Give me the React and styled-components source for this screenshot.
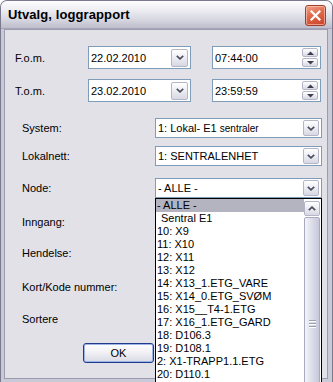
import React from "react";
import styled, { createGlobalStyle } from "styled-components";

const Global = createGlobalStyle`
  html, body { margin: 0; padding: 0; background: #ffffff; overflow: hidden; }
  body { font-family: "Liberation Sans", Arial, sans-serif; font-size: 11px; color: #000; }
  * { box-sizing: border-box; }
`;

const Window = styled.div`
  width: 333px;
  height: 382px;
  display: flex;
  flex-direction: column;
  background: #c4c5d4;
  border: 1px solid #7a7a8e;
  border-bottom: none;
  border-radius: 7px 7px 0 0;
  overflow: hidden;
`;

const TitleBar = styled.div`
  height: 28px;
  flex: none;
  display: flex;
  align-items: center;
  justify-content: space-between;
  padding: 0 6px 0 7px;
  background: linear-gradient(180deg, #fdfdfe 0%, #ececf2 35%, #d6d6e0 70%, #bdbdcc 100%);
  border-bottom: 1px solid #a5a5b8;
`;

const Title = styled.span`
  font-family: "Liberation Sans", Arial, sans-serif;
  font-weight: bold;
  font-size: 13px;
  color: #000;
  letter-spacing: 0.1px;
`;

const CloseBtn = styled.div`
  width: 21px;
  height: 21px;
  margin-top: 2px;
  border-radius: 3px;
  border: 1px solid #a33c28;
  background: linear-gradient(160deg, #f0a58d 0%, #e06848 45%, #c9432a 100%);
  display: flex;
  align-items: center;
  justify-content: center;
  box-shadow: inset 0 0 0 1px rgba(255, 210, 195, 0.6);
`;

const Frame = styled.div`
  flex: 1;
  display: flex;
  padding: 0 4px 3px 3px;
  background: #c9cad8;
`;

const Panel = styled.div`
  flex: 1;
  background: #e2e1e8;
  border: 1px solid #9c9cb0;
  padding: 16px 0 0 10px;
  display: flex;
  flex-direction: column;
`;

const Row = styled.div`
  display: flex;
  align-items: center;
  height: ${(p) => p.$h || 20}px;
  margin-top: ${(p) => p.$mt || 0}px;
  padding-left: ${(p) => p.$indent || 0}px;
`;

const Label = styled.div`
  width: ${(p) => p.$w}px;
  flex: none;
  white-space: nowrap;
`;

const Field = styled.div`
  position: relative;
  width: ${(p) => p.$w}px;
  height: ${(p) => p.$h || 20}px;
  margin-left: ${(p) => p.$ml || 0}px;
  flex: none;
  background: #fff;
  border: 1px solid #7f9db9;
  display: flex;
  align-items: center;
  padding: 0 2px 0 2px;
`;

const FieldText = styled.div`
  flex: 1;
  white-space: nowrap;
  overflow: hidden;
`;

const Small = styled.span`
  font-size: 10px;
`;

const DropBtn = styled.div`
  width: ${(p) => p.$w || 17}px;
  height: ${(p) => p.$h || 16}px;
  flex: none;
  border: 1px solid #b4b6c8;
  border-radius: 2px;
  background: linear-gradient(180deg, #ffffff 0%, #eeeef4 45%, #d7d8e2 100%);
  display: flex;
  align-items: center;
  justify-content: center;
`;

const Spin = styled.div`
  width: 16px;
  height: 19px;
  flex: none;
  display: flex;
  flex-direction: column;
  gap: 1px;
`;

const SpinBtn = styled.div`
  flex: 1;
  border: 1px solid #b4b6c8;
  border-radius: 2px;
  background: linear-gradient(180deg, #ffffff 0%, #ececf3 50%, #d7d8e2 100%);
  display: flex;
  align-items: center;
  justify-content: center;
`;

const List = styled.div`
  position: absolute;
  left: -1px;
  top: 19px;
  width: calc(100% + 2px);
  height: 200px;
  background: #fff;
  border: 1px solid #000;
  display: flex;
  z-index: 5;
`;

const Items = styled.div`
  flex: 1;
  display: flex;
  flex-direction: column;
`;

const Item = styled.div`
  height: 13px;
  line-height: 13px;
  padding-left: ${(p) => (p.$indent ? 5 : 1)}px;
  background: ${(p) => (p.$sel ? "#b3b4c0" : "transparent")};
  white-space: nowrap;
`;

const ScrollBar = styled.div`
  width: 16px;
  flex: none;
  display: flex;
  flex-direction: column;
  gap: 1px;
  padding: 2px 0 0 0;
  margin-right: 1px;
`;

const ScrollBtn = styled.div`
  height: 15px;
  border: 1px solid #b4b6c8;
  border-radius: 2px;
  background: linear-gradient(180deg, #ffffff 0%, #eeeef4 45%, #d7d8e2 100%);
  display: flex;
  align-items: center;
  justify-content: center;
`;

const Thumb = styled.div`
  flex: 1;
  border: 1px solid #a8aac0;
  border-radius: 2px;
  background: linear-gradient(90deg, #f4f4f8 0%, #dcdde9 50%, #c6c8d9 100%);
  display: flex;
  flex-direction: column;
  align-items: center;
  padding-top: 102px;
  gap: 1px;
`;

const Grip = styled.div`
  width: 7px;
  height: 1px;
  background: #9c9eb2;
  box-shadow: 0 1px 0 #ffffff;
  margin-bottom: 1px;
`;

const OkButton = styled.div`
  width: 71px;
  height: 20px;
  margin-left: 68px;
  margin-top: 14px;
  border: 1px solid #1f3b8a;
  border-radius: 3px;
  background: linear-gradient(180deg, #ffffff 0%, #f0f0f5 50%, #d8d9e3 100%);
  box-shadow: inset 0 0 0 1px #9db4e8;
  display: flex;
  align-items: center;
  justify-content: center;
`;

const Chevron = ({ up }) => (
  <svg width="8" height="5" viewBox="0 0 8 5">
    <path
      d={up ? "M0.8 4.2 L4 1.2 L7.2 4.2" : "M0.8 0.8 L4 3.8 L7.2 0.8"}
      fill="none"
      stroke="#4a4d5c"
      strokeWidth="1.7"
    />
  </svg>
);

const SmallArrow = ({ up }) => (
  <svg width="7" height="4" viewBox="0 0 7 4">
    <path d={up ? "M0 4 L3.5 0.5 L7 4 Z" : "M0 0 L3.5 3.5 L7 0 Z"} fill="#3c3f4c" />
  </svg>
);

const CloseX = () => (
  <svg width="11" height="11" viewBox="0 0 11 11">
    <path d="M1.5 1.5 L9.5 9.5 M9.5 1.5 L1.5 9.5" stroke="#fff" strokeWidth="2.2" strokeLinecap="square" />
  </svg>
);

const items = [
  "- ALLE -",
  "Sentral E1",
  "10: X9",
  "11: X10",
  "12: X11",
  "13: X12",
  "14: X13_1.ETG_VARE",
  "15: X14_0.ETG_SVØM",
  "16: X15__T4-1.ETG",
  "17: X16_1.ETG_GARD",
  "18: D106.3",
  "19: D108.1",
  "2: X1-TRAPP1.1.ETG",
  "20: D110.1",
];

function DateField({ value }) {
  return (
    <Field $w={103} $h={23}>
      <FieldText>{value}</FieldText>
      <DropBtn $h={18}>
        <Chevron />
      </DropBtn>
    </Field>
  );
}

function TimeField({ value }) {
  return (
    <Field $w={109} $h={23} $ml={21}>
      <FieldText>{value}</FieldText>
      <Spin>
        <SpinBtn>
          <SmallArrow up />
        </SpinBtn>
        <SpinBtn>
          <SmallArrow />
        </SpinBtn>
      </Spin>
    </Field>
  );
}

function Combo({ value, children }) {
  return (
    <Field $w={167} $h={20}>
      <FieldText>{value}</FieldText>
      <DropBtn $w={16} $h={16}>
        <Chevron />
      </DropBtn>
      {children}
    </Field>
  );
}

export default function App() {
  return (
    <>
      <Global />
      <Window>
        <TitleBar>
          <Title>Utvalg, loggrapport</Title>
          <CloseBtn>
            <CloseX />
          </CloseBtn>
        </TitleBar>
        <Frame>
          <Panel>
            <Row $h={23}>
              <Label $w={73}>F.o.m.</Label>
              <DateField value="22.02.2010" />
              <TimeField value="07:44:00" />
            </Row>
            <Row $h={23} $mt={10}>
              <Label $w={73}>T.o.m.</Label>
              <DateField value="23.02.2010" />
              <TimeField value="23:59:59" />
            </Row>
            <Row $mt={16} $indent={7}>
              <Label $w={133}>System:</Label>
              <Combo value={<>1: Lokal- E1 <Small>sentraler</Small></>} />
            </Row>
            <Row $mt={8} $indent={7}>
              <Label $w={133}>Lokalnett:</Label>
              <Combo value="1: SENTRALENHET" />
            </Row>
            <Row $mt={12} $indent={7}>
              <Label $w={133}>Node:</Label>
              <Combo value="- ALLE -">
                <List>
                  <Items>
                    {items.map((t, i) => (
                      <Item key={i} $sel={i === 0} $indent={t === "Sentral E1"}>
                        {t}
                      </Item>
                    ))}
                  </Items>
                  <ScrollBar>
                    <ScrollBtn>
                      <Chevron up />
                    </ScrollBtn>
                    <Thumb>
                      <Grip />
                      <Grip />
                      <Grip />
                    </Thumb>
                  </ScrollBar>
                </List>
              </Combo>
            </Row>
            <Row $mt={14} $indent={7}>
              <Label $w={133}>Inngang:</Label>
            </Row>
            <Row $mt={11} $indent={7}>
              <Label $w={133}>Hendelse:</Label>
            </Row>
            <Row $mt={14} $indent={7}>
              <Label $w={133}>Kort/Kode nummer:</Label>
            </Row>
            <Row $mt={12} $indent={7}>
              <Label $w={133}>Sortere</Label>
            </Row>
            <OkButton>OK</OkButton>
          </Panel>
        </Frame>
      </Window>
    </>
  );
}
